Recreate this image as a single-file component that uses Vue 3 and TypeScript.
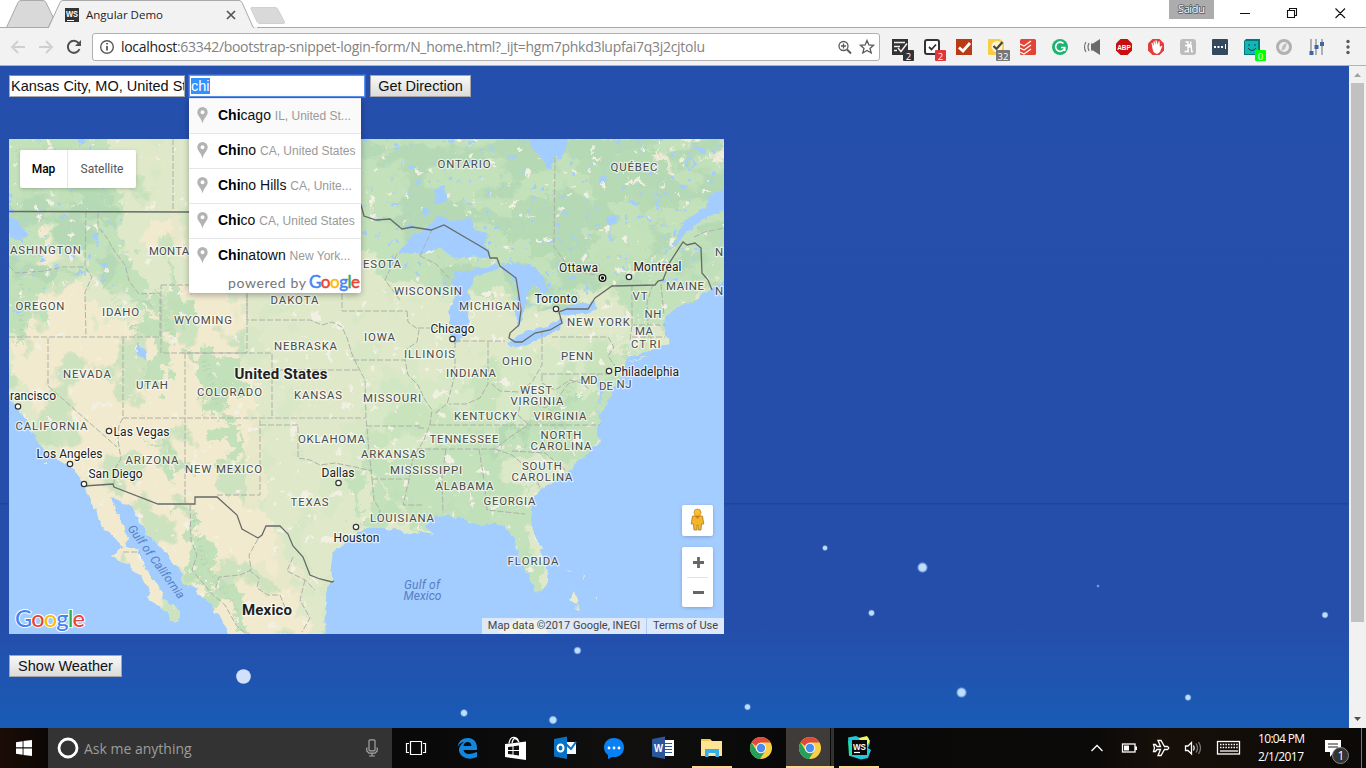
<script setup lang="ts">
interface Label { t: string; x: number; y: number; w?: number; k?: string }

const places: Label[] = [
  { t: 'ASHINGTON', x: 45.5, y: 250, w: 71 }, { t: 'MONTANA', x: 177, y: 251, w: 56 },
  { t: 'OREGON', x: 40, y: 306, w: 49 }, { t: 'IDAHO', x: 120.5, y: 312, w: 37 },
  { t: 'WYOMING', x: 203, y: 320, w: 58 }, { t: 'DAKOTA', x: 294.5, y: 300, w: 48 },
  { t: 'NEBRASKA', x: 305.5, y: 346, w: 63 }, { t: 'NEVADA', x: 87, y: 374, w: 48 },
  { t: 'UTAH', x: 152, y: 385, w: 32 }, { t: 'COLORADO', x: 229.5, y: 392, w: 65 },
  { t: 'KANSAS', x: 318, y: 395, w: 48 }, { t: 'CALIFORNIA', x: 51.5, y: 426, w: 72 },
  { t: 'ARIZONA', x: 152, y: 460, w: 53 }, { t: 'NEW MEXICO', x: 223.5, y: 469, w: 77 },
  { t: 'OKLAHOMA', x: 331.5, y: 439, w: 67 }, { t: 'TEXAS', x: 309.5, y: 502, w: 38 },
  { t: 'ESOTA', x: 382, y: 264, w: 38 }, { t: 'ONTARIO', x: 464, y: 164, w: 53 },
  { t: 'QUÉBEC', x: 634, y: 167, w: 47 }, { t: 'WISCONSIN', x: 428, y: 291, w: 68 },
  { t: 'MICHIGAN', x: 489.5, y: 306, w: 61 }, { t: 'IOWA', x: 379.5, y: 337, w: 31 },
  { t: 'ILLINOIS', x: 429.5, y: 354, w: 51 }, { t: 'INDIANA', x: 471, y: 373, w: 50 },
  { t: 'OHIO', x: 517, y: 361, w: 30 }, { t: 'PENN', x: 577, y: 356, w: 32 },
  { t: 'NEW YORK', x: 598.5, y: 322, w: 63 }, { t: 'VT', x: 640, y: 296, w: 15 },
  { t: 'NH', x: 653, y: 314, w: 17 }, { t: 'MAINE', x: 685, y: 286, w: 38 },
  { t: 'N', x: 719, y: 252 }, { t: 'N', x: 719, y: 291 },
  { t: 'MA', x: 644, y: 331, w: 18 }, { t: 'CT', x: 638.5, y: 344, w: 15 }, { t: 'RI', x: 655, y: 344, w: 11 },
  { t: 'MD', x: 589, y: 380, w: 17 }, { t: 'DE', x: 606, y: 386, w: 14 }, { t: 'NJ', x: 624, y: 384, w: 15 },
  { t: 'MISSOURI', x: 392, y: 398, w: 58 }, { t: 'WEST', x: 536, y: 390, w: 32 },
  { t: 'VIRGINIA', x: 537, y: 401, w: 53 }, { t: 'KENTUCKY', x: 485.5, y: 416, w: 63 },
  { t: 'VIRGINIA', x: 560, y: 416, w: 53 }, { t: 'TENNESSEE', x: 464, y: 439, w: 69 },
  { t: 'NORTH', x: 561, y: 434.5, w: 41 }, { t: 'CAROLINA', x: 561, y: 445.5, w: 61 },
  { t: 'ARKANSAS', x: 393, y: 454, w: 64 }, { t: 'MISSISSIPPI', x: 426, y: 470, w: 72 },
  { t: 'SOUTH', x: 542, y: 465.5, w: 40 }, { t: 'CAROLINA', x: 542, y: 476.5, w: 61 },
  { t: 'ALABAMA', x: 464.5, y: 486, w: 58 }, { t: 'GEORGIA', x: 509.5, y: 501, w: 52 },
  { t: 'LOUISIANA', x: 402, y: 518, w: 64 }, { t: 'FLORIDA', x: 533, y: 561, w: 51 },
  { t: 'rancisco', x: 33, y: 396, w: 46, k: 'city' }, { t: 'Las Vegas', x: 141.5, y: 431.5, w: 56, k: 'city' },
  { t: 'Los Angeles', x: 69.5, y: 454, w: 66, k: 'city' }, { t: 'San Diego', x: 115.5, y: 474, w: 54, k: 'city' },
  { t: 'Dallas', x: 338, y: 473, w: 33, k: 'city' }, { t: 'Houston', x: 356.5, y: 538, w: 46, k: 'city' },
  { t: 'Chicago', x: 452.5, y: 329, w: 44, k: 'city' }, { t: 'Toronto', x: 556, y: 299, w: 43, k: 'city' },
  { t: 'Ottawa', x: 578.5, y: 267.5, w: 39, k: 'city' }, { t: 'Montreal', x: 657.5, y: 267, w: 48, k: 'city' },
  { t: 'Philadelphia', x: 646.5, y: 371.5, w: 65, k: 'city' },
  { t: 'United States', x: 281, y: 373.5, w: 93, k: 'nation' }, { t: 'Mexico', x: 267, y: 609, w: 50, k: 'nation' },
  { t: 'Gulf of', x: 422, y: 584.5, w: 36, k: 'sea' }, { t: 'Mexico', x: 422.5, y: 596, w: 38, k: 'sea' },
]

const dots: number[][] = [[18, 406.5], [109, 431], [70, 464], [84, 484], [338.5, 483], [356, 527], [452.5, 339], [556, 309], [629, 277], [609, 371]]

const states = [
  'M9 266L16 273L45 271L62 267H84', 'M86 212L85 267L92 277L85 292L86 337', 'M9 337H160V293L139 294L129 281L125 265L115 252L107 238L98 227V212',
  'M161 285H247V353H161Z', 'M123 338V418L119 425L118 440L121 459L114 470L114 484', 'M48 338V386L117 447', 'M123 418H365', 'M185 353V504', 'M185 353H272V418',
  'M217 495H260V418', 'M260 425H298V458L310 460L320 465L335 463L355 467L372 471', 'M173 139V211', 'M247 212V320H310L322 325L332 322L342 327L347 338L352 354L358 367L365 380L366 418L369 450L372 479',
  'M272 370H358', 'M342 222V311H407', 'M353 360H405', 'M366 426H420',
  'M372 479H410', 'M372 479L374 500L380 510L378 525',
  'M407 311L408 322L419 330L417 342L407 349L405 360L408 375L418 385L425 400L432 410L430 424L424 440L413 458L409 480L403 505H424', 'M430 425H600', 'M418 428H426', 'M417 449H495L510 437L528 425',
  'M446 449L442 475L443 513', 'M479 449L484 480L487 510L525 514', 'M495 449L512 455L530 470L540 487', 'M512 451L545 453L565 470',
  'M418 328H448', 'M455 342V375L452 386L447 404L434 414', 'M488 342V384L480 398L466 404L449 404', 'M455 341H505', 'M542 330V365L532 382L519 392L500 391L492 384', 'M541 374H610',
  'M552 337H608L614 347L608 356L615 366', 'M542 375V383L555 390L570 380L582 383L590 390', 'M528 401L545 408L558 398L568 384L582 379', 'M528 424L518 415L520 405',
  'M555 157L554 247L565 262L580 272L600 276', 'M632 286V325L630 340', 'M653 284L647 302L648 325', 'M661 284L664 315', 'M631 325H665', 'M632 337H665', 'M651 337V345',
  'M400 300L385 280L398 252', 'M420 256L432 230', 'M420 256L436 264L449 278',
  'M123 552H140', 'M190 505L191 540L197 555L192 570L203 583L212 594L225 605L236 625L246 634',
  'M258 539L249 555L251 570L240 575L219 577L215 590', 'M249 570L259 578L257 588L268 595L280 595L286 610', 'M293 557L287 571L305 580L315 590', 'M305 580L300 600L310 618L302 632', 'M694 237L705 232L724 228',
]

const landMain = 'M0 130H740V272L724 280L718 284L710 290L700 297L685 304L672 310L665 318L663 330L666 335L672 342L667 345L640 353L627 359L624 368L620 380L610 395L605 404L600 413L594 405L597 413L600 422L597 430L601 441L590 451L578 462L564 474L552 483L538 490L532 502L530 515L533 530L541 550L548 568L547 582L543 590L535 592L530 577L520 562L516 548L515 538L508 530L495 522L482 527L473 522L463 518L447 515L433 518L425 526L433 534L423 532L410 535L400 530L384 528L368 528L358 531L351 540L341 546L333 553L331 565L332 578L329 585L326 600L325 640H230L227 630L220 617L212 605L203 597L193 586L182 583L183 574L178 568L170 558L158 545L146 532L137 518L133 507L119 500L111 497L113 505L118 515L125 530L128 545L139 550L143 565L150 575L158 585L163 596L168 606L175 604L180 614L178 622L172 622L168 613L158 605L146 598L150 590L140 575L125 563L111 556L124 547L115 537L103 527L97 513L90 497L84 486L78 475L70 466L62 462L45 452L37 442L28 423L20 411L9 395L0 385Z'

const suggestions = [
  { rest: 'cago', area: 'IL, United St...' }, { rest: 'no', area: 'CA, United States' },
  { rest: 'no Hills', area: 'CA, Unite...' }, { rest: 'co', area: 'CA, United States' }, { rest: 'natown', area: 'New York...' },
]

const stars = [[825, 482, 2.5], [922.5, 501.5, 5], [1098, 520, 1.3], [871.5, 547, 3], [1325, 549, 3], [577.5, 584.5, 3.5], [961.5, 626.5, 5], [1188, 631.5, 3], [464, 647, 3.5], [553, 654, 4], [747.5, 641, 3]]
const logo = [['G', '#4285f4'], ['o', '#ea4335'], ['o', '#fbbc05'], ['g', '#4285f4'], ['l', '#34a853'], ['e', '#ea4335']]
</script>

<template>
  <div class="screen">
    <svg class="tabs" width="1366" height="28" viewBox="0 0 1366 28">
      <path d="M0 28.500H6L18 2.500Q19 .5 21 .5H43Q45 .5 46 2.500L53 17L48 28" fill="#d9d9d9" stroke="#a9a9a9" />
      <path d="M0 28.500H48L60 2.500Q61 .5 63 .5H239Q241 .5 242 2.500L253 27Q254 28.500 257 28.500" fill="#f2f2f2" stroke="#a9a9a9" />
      <path d="M252 7.500H275Q277 7.500 278 9.500L284.500 22Q285 23.500 283 23.500H260Q258 23.500 257 21.500L251 9Q250.500 7.500 252 7.500Z" fill="#d9d9d9" stroke="#d0d0d0" />
      <path d="M257 27.500H1366" stroke="#a9a9a9" />
      <path d="M0 27.500H48" stroke="#a9a9a9" />
      <rect x="65" y="8" width="14" height="14" fill="#343434" />
      <text x="66" y="16.500" class="wsmini" textLength="12" lengthAdjust="spacingAndGlyphs">WS</text><path d="M67 20.500H74" stroke="#fff" />
      <text x="86" y="19" class="title" textLength="77">Angular Demo</text>
      <path d="M227 11L235 19M235 11L227 19" stroke="#555" stroke-width="1.700" />
      <rect x="1169" width="45" height="19" fill="#acacac" />
      <text x="1178" y="13" class="user" textLength="27">Saidu</text>
      <path d="M1240 13.500H1250M1287.500 10.500H1294.500V17.500H1287.500ZM1289.500 10V8.500H1296.500V15.500H1295M1335.500 8.500L1345 18M1345 8.500L1335.500 18" fill="none" stroke="#111" stroke-width="1.100" />
    </svg>

    <div class="toolbar">
      <svg class="nav" width="84" height="37" viewBox="0 28 84 37" fill="none" stroke-width="1.800">
        <path d="M25 47H12M18 41L12 47L18 53" stroke="#cfcfcf" /><path d="M39 47H52M46 41L52 47L46 53" stroke="#cfcfcf" />
        <path d="M78.500 43A6 6 0 1 0 79.500 49" stroke="#505050" stroke-width="2" /><path d="M81 40V46H75Z" fill="#505050" />
      </svg>
      <div class="omnibox">
        <svg width="16" height="16" viewBox="0 0 16 16" fill="none" stroke="#5a5a5a" stroke-width="1.400"><circle cx="8" cy="8" r="6.300" /><path d="M8 7V11.500M8 4V5.500" stroke-width="1.800" /></svg>
        <svg class="url" width="600" height="22" viewBox="0 0 600 22"><text x="0" y="16" textLength="584"><tspan fill="#222">localhost</tspan>:63342/bootstrap-snippet-login-form/N_home.html?_ijt=hgm7phkd3lupfai7q3j2cjtolu</text></svg>
        <svg class="omni-actions" width="40" height="18" viewBox="837 38 40 18" fill="none" stroke="#5a5a5a" stroke-width="1.300">
          <circle cx="843.500" cy="46" r="4.500" /><path d="M847 49.500L851 53.500" stroke-width="2" /><path d="M841 46H846M843.500 43.500V48.500" />
          <path d="M867 40.500L868.900 45L873.500 45.300L870 48.400L871.200 53L867 50.500L862.800 53L864 48.400L860.500 45.300L865.100 45Z" />
        </svg>
      </div>
      <svg class="extensions" width="484" height="37" viewBox="882 28 484 37">
        <rect x="892" y="39" width="16" height="16" fill="#333" /><path d="M894 42.500H905M894 46.500H900M894 50.500H897M898 48L901 51.500L907 43.500" stroke="#eee" stroke-width="1.500" fill="none" />
        <rect x="925" y="40" width="14" height="14" rx="2" fill="#fff" stroke="#333" stroke-width="2" /><path d="M929 47L931.500 49.500L936 44.500" stroke="#333" stroke-width="1.800" fill="none" />
        <rect x="956" y="39" width="16" height="16" fill="#b93a14" /><path d="M959 47.500L963 51L970 43" stroke="#fff" stroke-width="2.800" fill="none" />
        <rect x="988" y="39" width="16" height="16" rx="1" fill="#f9ce45" /><path d="M1000 39H1004V43Z" fill="#fff3bf" /><circle cx="997" cy="46.500" r="5.500" fill="#fdf3cf" /><path d="M993.500 46L996.500 49L1002.500 42" stroke="#444" stroke-width="2.200" fill="none" />
        <rect x="1020" y="39" width="16" height="16" rx="1.500" fill="#e34435" /><path d="M1020 44L1024 46L1031 41M1020 48L1024 50L1031 45M1020 52L1024 54L1031 49" stroke="#fff" stroke-width="1.200" fill="none" />
        <circle cx="1060" cy="47" r="8" fill="#1cb472" /><path d="M1063.500 43.500A4.600 4.600 0 1 0 1064.500 48.500M1061 47.500H1064.800V51" stroke="#fff" stroke-width="1.600" fill="none" />
        <path d="M1091 43.500H1093L1100 39V55L1093 50.500H1091Z" fill="#6b6b6b" /><path d="M1089 43Q1087 47 1089 51M1086 42Q1083 47 1086 52" stroke="#777" stroke-width="1.200" fill="none" />
        <path d="M1120.500 39H1127.500L1132 43.500V50.500L1127.500 55H1120.500L1116 50.500V43.500Z" fill="#c80d0d" /><text x="1117.200" y="50" class="abp" textLength="13.600" lengthAdjust="spacingAndGlyphs">ABP</text>
        <path d="M1152.500 39H1159.500L1164 43.500V50.500L1159.500 55H1152.500L1148 50.500V43.500Z" fill="#e53b3b" /><path d="M1153 49L1152 43L1154 47V41.500L1156 46V40.500L1158 46L1159 41.500L1159.500 47.500L1162 46L1159.500 52Q1157 55 1154 52Z" fill="#fff" stroke="#fff" stroke-width=".8" />
        <rect x="1180" y="39" width="16" height="16" rx="3" fill="#bcbcbc" /><path d="M1185.500 42H1188V51.500M1184.500 51.500H1189M1188 47.500Q1191.500 45.500 1191.500 48.500V51.500H1193M1185 45.500H1192M1188 45.500Q1192 44 1190.500 41.500" stroke="#fff" stroke-width="1.400" fill="none" />
        <rect x="1212" y="39" width="16" height="16" rx="1" fill="#34495e" /><path d="M1214 46h2v2h-2zM1217.500 46h2v2h-2zM1221 46h2v2h-2zM1225 44h1v5h-1z" fill="#fff" />
        <path d="M1246 39H1260V53L1258 55H1244V41Z" fill="#00797c" /><path d="M1245 41H1258V54H1245Z" fill="#12b5b8" /><path d="M1249 44V46M1255 44V46M1248 48Q1252 53 1256 48" stroke="#174448" fill="none" />
        <circle cx="1284" cy="47" r="6.500" fill="#eee" stroke="#b1b1b1" stroke-width="3" /><path d="M1281 51L1283 45L1287 43L1285 49Z" fill="#bdbdbd" />
        <path d="M1311 39V55M1316 39V55M1322 39V55" stroke="#999" stroke-width="1.500" /><path d="M1309.500 51h4v4h-4zM1314.500 45h4v4h-4zM1320 42h4v4h-4z" fill="#3c67a4" />
        <circle cx="1348" cy="41.500" r="1.700" fill="#5a5a5a" /><circle cx="1348" cy="47" r="1.700" fill="#5a5a5a" /><circle cx="1348" cy="52.500" r="1.700" fill="#5a5a5a" />
        <g class="badge"><rect x="903" y="50" width="11" height="11" rx="1" fill="#333" /><text x="908.500" y="59.500">2</text>
          <rect x="935" y="50" width="11" height="11" rx="1" fill="#dd3838" /><text x="940.500" y="59.500">2</text>
          <rect x="996" y="50" width="14" height="11" rx="1" fill="#777" /><text x="1003" y="59.500">32</text>
          <rect x="1255" y="50" width="11" height="11" rx="1" fill="#0f0" /><text x="1260.500" y="59.500">0</text></g>
      </svg>
    </div>

    <div class="viewport">
      <main class="page">
        <svg class="sky" width="1349" height="662" viewBox="0 0 1349 662">
          <defs><radialGradient id="star"><stop offset="0" stop-color="#cfe8ff" /><stop offset=".65" stop-color="#bfe0ff" /><stop offset="1" stop-color="#7fb4ee" stop-opacity=".25" /></radialGradient></defs>
          <rect y="437" width="1349" height="1.500" fill="#1d4699" />
          <circle v-for="(s, i) in stars" :key="i" :cx="s[0]" :cy="s[1]" :r="s[2] + 0.4" fill="url(#star)" :opacity="s[2] > 2 ? 0.95 : 0.5" />
          <circle cx="243.500" cy="610.500" r="7.300" fill="#d2e1fb" />
        </svg>
        <div class="form">
          <div class="field">Kansas City, MO, United States</div>
          <div class="field focus"><span class="picked">chi</span>
            <div class="suggest">
              <div v-for="s in suggestions" :key="s.rest + s.area" class="item">
                <svg width="11" height="17" viewBox="0 0 11 17"><path fill-rule="evenodd" d="M5.500 0A5.200 5.200 0 0 0 .3 5.200C.3 9 4.500 11 5.500 16.500C6.500 11 10.700 9 10.700 5.200A5.200 5.200 0 0 0 5.500 0ZM5.500 3.300A2 2 0 1 1 5.500 7.300A2 2 0 1 1 5.500 3.300Z" fill="#b3b3b3" /></svg>
                <span class="place"><b>Chi</b>{{ s.rest }} <small>{{ s.area }}</small></span>
              </div>
              <svg class="powered" width="172" height="20" viewBox="0 0 172 20">
                <text x="39" y="14.500" textLength="78" class="by">powered by</text>
                <text x="120" y="15" textLength="51" class="glogo"><tspan v-for="(l, i) in logo" :key="i" :fill="l[1]" :stroke="l[1]">{{ l[0] }}</tspan></text>
              </svg>
            </div>
          </div>
          <div class="btn">Get Direction</div>
        </div>

        <div class="map">
          <svg width="715" height="495" viewBox="9 139 715 495">
            <defs>
              <filter id="rough" x="-5%" y="-5%" width="110%" height="110%" color-interpolation-filters="sRGB"><feTurbulence type="fractalNoise" baseFrequency=".12" numOctaves="3" seed="4" /><feDisplacementMap in="SourceGraphic" scale="7" xChannelSelector="R" yChannelSelector="G" /></filter>
              <filter id="edge" x="-5%" y="-5%" width="110%" height="110%" color-interpolation-filters="sRGB"><feTurbulence type="fractalNoise" baseFrequency=".05" numOctaves="4" seed="9" /><feDisplacementMap in="SourceGraphic" scale="45" xChannelSelector="R" yChannelSelector="G" /></filter>
              <filter id="greens" x="0" y="0" width="100%" height="100%" color-interpolation-filters="sRGB"><feTurbulence type="fractalNoise" baseFrequency=".026 .02" numOctaves="5" seed="11" /><feColorMatrix values="0 0 0 0 .75 0 0 0 0 .875 0 0 0 0 .72 14 0 0 0 -7.700" /></filter>
              <filter id="darks" x="0" y="0" width="100%" height="100%" color-interpolation-filters="sRGB"><feTurbulence type="fractalNoise" baseFrequency=".02 .03" numOctaves="5" seed="23" /><feColorMatrix values="0 0 0 0 .71 0 0 0 0 .85 0 0 0 0 .71 14 0 0 0 -7" /></filter>
              <filter id="pales" x="0" y="0" width="100%" height="100%" color-interpolation-filters="sRGB"><feTurbulence type="fractalNoise" baseFrequency=".09" numOctaves="4" seed="5" /><feColorMatrix values="0 0 0 0 .95 0 0 0 0 .94 0 0 0 0 .89 0 18 0 0 -12.600" /></filter>
              <filter id="ponds" x="0" y="0" width="100%" height="100%" color-interpolation-filters="sRGB"><feTurbulence type="fractalNoise" baseFrequency=".13" numOctaves="3" seed="31" /><feColorMatrix values="0 0 0 0 .64 0 0 0 0 .8 0 0 0 0 1 0 0 20 0 -14" /></filter>
              <clipPath id="land"><path :d="landMain" /></clipPath>
              <clipPath id="north"><path d="M340 139H724V285L660 282L612 286L585 310L520 310L500 265L440 290L350 230ZM9 139H115L125 250L155 310L100 285L60 270L9 330Z" /></clipPath>
              <clipPath id="east"><path d="M365 430L500 340L724 200V480L550 640H480V534H370Z" /></clipPath>
              <clipPath id="west"><path d="M0 130H130L180 260L245 330V560L340 640H0Z" /></clipPath>
            </defs>
            <rect x="9" y="139" width="715" height="495" fill="#a3ccff" />
            <g filter="url(#rough)">
              <g clip-path="url(#land)">
                <rect x="0" y="130" width="740" height="510" fill="#dfe9ca" />
                <g filter="url(#edge)">
                  <path d="M20 285H85L95 315L140 325L165 290L220 280L245 305L240 350L250 410L268 425L262 500L280 530L300 580L310 640H80V480L60 450L30 400L10 350Z" fill="#f2eacf" />
                  <path d="M45 240L75 220L80 265L45 262ZM150 222L185 220L190 250L140 250Z" fill="#f2eacf" />
                  <path d="M335 120H760V260L690 300L665 325L640 330L612 290L560 305L530 290L490 295L400 285L345 235ZM-10 120H115L120 190L128 250L155 300L150 315L120 290L90 270L70 210L40 250L38 330L-10 330Z" fill="#c3e1bb" />
                  <path d="M-10 270H30L25 350L10 330ZM170 260L190 320L155 315ZM145 310L172 330L165 400L145 390ZM190 355H240L235 420L205 415ZM218 420L240 430L232 470L220 465ZM140 430L180 460L195 480L170 465ZM185 505L200 520L204 560L245 600L247 640L190 570Z" fill="#c2e0b9" />
                  <path d="M366 380L430 380L500 360L640 320L610 370L580 450L366 450Z" fill="#d6e8c6" />
                  <path d="M440 640L545 600L530 500L600 440L640 340L620 370L580 400L500 430L440 450L370 455L350 530L440 520ZM352 470L372 475V525L350 530Z" fill="#c3e1bb" />
                  <path d="M500 455L545 453L560 475L525 500L505 480ZM375 470L395 500L400 530L390 510Z" fill="#dde8c9" />
                  <path d="M480 220L550 190L600 240L570 280L520 240ZM570 145L660 150L680 210L600 210ZM580 380L560 410L500 435L485 460L530 430L580 410ZM30 145L105 190L120 240L90 200L40 180Z" fill="#b6dab4" />
                  <path d="M682 139L724 139V170L700 150ZM654 156L675 160L670 170Z" fill="#f2ebdb" />
                </g>
                <g clip-path="url(#west)"><rect x="9" y="139" width="715" height="495" filter="url(#greens)" opacity=".65" /></g>
                <rect x="9" y="139" width="715" height="495" filter="url(#greens)" opacity=".22" />
                <g clip-path="url(#north)"><rect x="9" y="139" width="715" height="495" filter="url(#darks)" /><rect x="9" y="139" width="715" height="495" filter="url(#ponds)" /></g>
                <g clip-path="url(#east)"><rect x="9" y="139" width="715" height="495" filter="url(#greens)" opacity=".45" /></g>
                <rect x="9" y="139" width="715" height="495" filter="url(#pales)" />
              </g>
              <g fill="#a3ccff">
                <path d="M663 253L675 242L680 228L690 217L705 208L712 193L740 184V205L705 217L690 228L680 240L665 254ZM397 255L410 237L430 225L437 215L450 220L470 217L474 230L488 233L485 245L490 260L473 255L460 259L440 247L420 256L413 252Z" />
                <path d="M452 282L460 273L477 268L500 265L498 270L488 272L475 277L468 290L470 303L468 330L460 342L453 343L450 327V307L455 290ZM500 263L537 267L545 283L550 292L542 295L533 283L527 297L523 317L518 327L515 312L518 290L513 277L503 270Z" />
                <path d="M508 342L527 331L547 326L562 319L560 328L547 336L530 343L515 348ZM557 313L567 307L580 303L595 301L596 308L588 313L570 315ZM523 130L533 150L542 157L545 167L552 168L553 158L563 158L567 145V130ZM434 190L445 187L448 200L440 204L436 202ZM137 342L147 352L145 361L138 353ZM9 215L20 222L27 235L18 240L9 235Z" />
                <circle cx="690" cy="164" r="5" fill="none" stroke="#a3ccff" stroke-width="2" /><path d="M605 219L616 215L618 223L608 225ZM645 217L653 219L650 223Z" />
                <path d="M599 405L603 390L598 377L594 374L600 392Z" />
              </g>
              <path d="M626 362L650 355L640 359ZM565 571L572 570L570 572ZM582 570L585 575L582 582L584 574ZM569 600L574 591L578 604L573 602ZM574 608L579 607L578 611ZM596 597h2v2h-2zM500 630L520 619L540 621L548 634H500ZM46 463h3v2h-3z" fill="#e7ecd0" />
            </g>
            <path d="M16 150L50 180L80 185M20 280L22 345M103 280L140 340M160 300L175 345M205 360L218 405M193 505L203 560L243 620M501 445L540 420L572 386" fill="none" stroke="#97c4a4" stroke-width="5" stroke-dasharray="1 4" opacity=".35" filter="url(#rough)" />
            <path v-for="(d, i) in states" :key="i" :d="d" fill="none" stroke="#adb2a7" stroke-width="1" stroke-dasharray="6 2" />
            <path d="M9 211.500L189 212H345L361 205L364 216L376 220L390 219L402 229L412 227L431 230L444 225L480 246L488 251L490 258L497 258L500 266L516 278L518 290L521 310L519 325L510 333L509 338L515 342H522L535 333L550 330L562 323L559 312L567 309H588L595 298L612 286L655 285L658 281L663 280L670 262L683 242L687 245L695 243L701 248L702 273L708 280L712 290M84 486L113 484L114 487L158 504H195V497H217L237 515L242 529L258 538L262 535L266 526L280 526L288 534L293 546L303 557L310 575L320 579L332 582L334 581" fill="none" stroke="#666b68" stroke-width="1.300" />
            <g class="labels">
              <text v-for="(p, i) in places" :key="i" :x="p.x" :y="p.y + (p.k === 'nation' ? 5.5 : 4.1)" :textLength="p.w" :class="p.k ?? 'state'">{{ p.t }}</text>
              <text class="sea cal" transform="translate(153 564) rotate(54)" textLength="88">Gulf of California</text>
            </g>
            <circle v-for="(d, i) in dots" :key="'d' + i" :cx="d[0]" :cy="d[1]" r="2.700" fill="#fff" stroke="#333" stroke-width="1.200" />
            <circle cx="602.500" cy="278" r="3.300" fill="#fff" stroke="#111" stroke-width="1.300" /><circle cx="602.500" cy="278" r="1.700" fill="#111" />
            <text x="15" y="626.500" textLength="70" class="mlogo halo" aria-hidden="true"><tspan v-for="(l, i) in logo" :key="i" :fill="l[1]">{{ l[0] }}</tspan></text>
          </svg>
          <div class="types"><span class="on">Map</span><span>Satellite</span></div>
          <div class="controls">
            <svg class="card" width="31" height="31" viewBox="0 0 31 31"><path d="M10.500 11H20.500L21.800 19H19.500L19 25H16.200V20H15V25H12L11.500 19H9.200Z" fill="#f5b52b" stroke="#a77b25" stroke-width=".8" /><circle cx="15.500" cy="7.500" r="3.500" fill="#fcbf2c" stroke="#a77b25" stroke-width=".6" /><path d="M13 11H18L15.500 14Z" fill="#dc7626" /></svg>
            <svg class="card" width="31" height="60" viewBox="0 0 31 60"><path d="M11 15.500H22M16.500 10V21M11 45.500H22" stroke="#666" stroke-width="2.800" /><path d="M5 30.500H26" stroke="#e3e3e3" /></svg>
          </div>
          <div class="credits"><span>Map data ©2017 Google, INEGI</span><span>Terms of Use</span></div>
        </div>
        <div class="btn weather">Show Weather</div>
      </main>
      <svg class="scroll" width="17" height="662" viewBox="0 0 17 662"><rect width="17" height="662" fill="#f1f1f1" /><rect x="2" y="17" width="13" height="539" fill="#c1c1c1" /><path d="M5 11L8.500 7L12 11Z" fill="#a3a3a3" /><path d="M5 651L8.500 655L12 651Z" fill="#505050" /></svg>
    </div>

    <div class="taskbar">
      <svg class="start" width="48" height="40" viewBox="0 728 48 40"><path d="M16 742.200L22.600 741.200V747.300H16ZM23.500 741L32 740V747.300H23.500ZM16 748.500H22.600V754.800L16 753.800ZM23.500 748.500H32V756L23.500 755Z" fill="#fff" /></svg>
      <div class="search">
        <svg width="22" height="22" viewBox="0 0 22 22"><circle cx="11" cy="11" r="9" fill="none" stroke="#fff" stroke-width="2.800" /></svg>
        <span>Ask me anything</span>
        <svg width="12" height="18" viewBox="0 0 12 18" fill="none" stroke="#a5a5a5" stroke-width="1.200"><rect x="3" y=".8" width="6" height="11" rx="1" /><path d="M.8 8.500V12L3 14.200H9L11.200 12V8.500M6 14.500V17M3 17H9" /></svg>
      </div>
      <svg class="apps" width="488" height="40" viewBox="392 728 488 40">
        <rect x="786" y="728" width="44" height="40" fill="#3e3b38" /><rect x="831" y="728" width="3" height="40" fill="#34312e" />
        <path d="M692 766h40v2h-40zM786 766h48v2h-48zM839 766h40v2h-40z" fill="#fbd88b" />
        <path d="M410.500 741.500H421.500V754.500H410.500ZM409 743.500H406.500V752.500H409M423 743.500H425.500V752.500H423" fill="none" stroke="#fff" stroke-width="1.200" />
        <path d="M457.500 747Q459 738 468 738Q477.500 738.500 477 750H463.500Q465 757 477 752V757Q468 761 462 756Q455 749 464 742Q460 742.500 457.500 747ZM463.500 746H471.500Q471 742 467.500 742Q464 742.300 463.500 746Z" fill="#1287e0" fill-rule="evenodd" />
        <path d="M505 744L526 741.500V760L505 757Z" fill="#fff" /><path d="M509 743.500Q510 737 514 737.500Q518 738 518.500 742M512 743Q514 734.500 519 742" stroke="#fff" fill="none" stroke-width="1.300" /><path d="M508 747L512.500 746.500V750H508ZM513.500 746.300L519 745.500V750H513.500ZM508 751H512.500V754.500L508 754ZM513.500 751H519V755.500L513.500 754.800Z" fill="#111" />
        <path d="M565 742H576V754H565Z" fill="#f4f9ff" /><path d="M566 744L571 749L576 742" stroke="#0871c5" stroke-width="2" fill="none" /><path d="M554 739L567 736.500V759L554 756.500Z" fill="#0871c5" /><ellipse cx="560.500" cy="748" rx="3" ry="3.500" fill="none" stroke="#fff" stroke-width="2" />
        <path d="M614 738C607.500 738 604 742.500 604 747.500Q604 752 608 755V759L612 757C620 758 624 753 624 747.500C624 742 620 738 614 738Z" fill="#0a80f5" /><circle cx="609" cy="748" r="1.400" fill="#fff" /><circle cx="614" cy="748" r="1.400" fill="#fff" /><circle cx="619" cy="748" r="1.400" fill="#fff" />
        <path d="M664 740H674V756H664Z" fill="#fff" /><path d="M665 743.500H672M665 746.500H672M665 749.500H672M665 752.500H672" stroke="#2b579a" stroke-width="1.200" /><path d="M652 739L665 736.500V759L652 756.500Z" fill="#2b579a" /><text x="654" y="752" class="word" textLength="9" lengthAdjust="spacingAndGlyphs">W</text>
        <path d="M701 739H710L712 741H722V756H701Z" fill="#fee594" /><path d="M701 739H710V741H701Z" fill="#f5c741" /><path d="M705 749H719V757H715.500V753H708.500V757H705Z" fill="#38aee8" />
        <g v-for="cx in [761, 810]" :key="cx" :transform="`translate(${cx} 748)`"><circle r="11" fill="#f9cf45" /><path d="M-9.500-5.500A11 11 0 0 1 9.500-5.500H0Q-4-5-4.800-2Z" fill="#df4a3e" /><path d="M-9.500-5.500A11 11 0 0 0-1 11L4.500 2.500L-4.500 2.500Z" fill="#24a05b" /><circle r="5.200" fill="#f5f6f2" /><circle r="4.200" fill="#4a8bf4" /></g>
        <path d="M848 737.500L856 736L860 738L868 737L870 743L868 748L871 750L868 758L861 759.500L850 756Z" fill="#20c7dd" /><path d="M859 738L867 736L870 741L864 750Z" fill="#eef85d" /><path d="M848 740L852 745V755L849 756Z" fill="#22dfae" /><rect x="852" y="740" width="15" height="15" fill="#080808" /><text x="853" y="749.500" class="ws" textLength="13" lengthAdjust="spacingAndGlyphs">WS</text><path d="M854 752.500H860" stroke="#fff" stroke-width="1.200" />
      </svg>
      <svg class="tray" width="286" height="40" viewBox="1080 728 286 40">
        <g fill="none" stroke="#fff" stroke-width="1.300">
          <path d="M1091.500 751L1097 745.500L1102.500 751" /><rect x="1122.500" y="744" width="12.500" height="8" /><path d="M1136 746.500V750" stroke-width="2" />
          <path d="M1153.500 744.500H1155.500L1157 746.500H1160.500L1158 740.500H1161L1164.500 746.500H1167.500Q1170 748 1167.500 749.500H1164.500L1161 755.500H1158L1160.500 749.500H1157L1155.500 751.500H1153.500L1154.500 748Z" />
          <path d="M1185.500 746H1188L1191.500 742.500V754L1188 750.500H1185.500Z" /><path d="M1193.500 745.500Q1195 748 1193.500 750.500" /><path d="M1196 743.500Q1199 748 1196 752.500M1198.500 742Q1202.500 748 1198.500 754" stroke="#777" />
          <rect x="1217.500" y="741.500" width="22" height="12.500" /><path d="M1220 744.500H1238M1220 747.500H1238" stroke-dasharray="1.500 1.200" /><path d="M1220 751H1238" />
        </g>
        <path d="M1124 745.500h5v5h-5z" fill="#fff" />
        <text x="1258" y="743" class="clock" textLength="47">10:04 PM</text><text x="1258" y="761" class="clock" textLength="46">2/1/2017</text>
        <path d="M1325 740H1341V752H1334L1330 757V752H1325Z" fill="#fff" /><path d="M1328 744H1338M1328 747H1338" stroke="#222" /><circle cx="1340.500" cy="755.500" r="8" fill="#333" stroke="#888" /><text x="1337.500" y="760" class="clock">1</text><path d="M1361.500 728V768" stroke="#777" />
      </svg>
    </div>
  </div>
</template>

<style>
body { margin: 0; overflow: hidden; }
</style>

<style scoped>
.screen { width: 1366px; height: 768px; display: flex; flex-direction: column; overflow: hidden; background: #fff; font-family: "Liberation Sans", Arial, sans-serif; }
svg { display: block; flex: none; }
.title { font: 11.5px "Open Sans", sans-serif; fill: #222; }
.user { font: 11.5px "Open Sans", sans-serif; fill: #fff; stroke: #555; stroke-width: 1.5px; paint-order: stroke; }
.wsmini { font: bold 8.5px "Liberation Sans", sans-serif; fill: #fff; }
.toolbar { height: 37px; background: #f2f2f2; border-bottom: 1px solid #b3b3b3; display: flex; }
.omnibox { box-sizing: border-box; flex: none; width: 788px; height: 28px; margin: 5px 2px 0 8px; border: 1px solid #b0b0b0; border-radius: 3px; background: #fff; display: flex; align-items: center; padding: 0 2px 0 6px; }
.url { margin-left: 6px; }
.url text { font: 14px "Open Sans", sans-serif; fill: #828282; }
.omni-actions { margin-left: auto; }
.badge text { font: 9.5px "Open Sans", sans-serif; fill: #fff; text-anchor: middle; }
.abp { font: bold 7.5px "Liberation Sans", sans-serif; fill: #fff; }
.viewport { height: 662px; display: flex; }
.page { position: relative; box-sizing: border-box; width: 1349px; padding: 9px 9px 0; background: linear-gradient(#254fac 0, #254eab 560px, #2252ae 590px, #195bb5 662px); }
.sky { position: absolute; left: 0; top: 0; }
.form { position: relative; z-index: 3; display: flex; }
.field { position: relative; box-sizing: border-box; width: 176px; height: 22px; border: 1px solid #aaa; border-top-color: #8a8a8a; background: #fff; margin-right: 4px; padding: 0 1px; font-size: 14.5px; line-height: 20px; white-space: nowrap; overflow: hidden; color: #111; }
.field.focus { border: 1px solid #5a95f5; box-shadow: 0 0 0 1px #3468cf; overflow: visible; margin-right: 5px; }
.picked { background: #3390ff; color: #fff; display: inline-block; height: 16px; line-height: 17px; margin-top: 2px; vertical-align: top; }
.btn { position: relative; box-sizing: border-box; height: 22px; width: 101px; border: 1px solid #a6a6a6; background: linear-gradient(#f8f8f8, #dcdcdc); text-align: center; font-size: 14.5px; line-height: 20px; color: #111; }
.suggest { position: absolute; left: -1px; top: 22px; width: 172px; height: 195px; background: #fff; border-radius: 0 0 2px 2px; box-shadow: 0 2px 6px rgba(0, 0, 0, .3); z-index: 4; }
.item { box-sizing: border-box; height: 35px; border-top: 1px solid #e6e6e6; display: flex; align-items: center; padding-left: 8px; }
.item:first-child { background: #fafafa; }
.item svg { margin-top: -2px; }
.place { margin-left: 10px; font-size: 14px; line-height: 33px; color: #111; }
.place b { color: #000; }
.place small { font-size: 12px; color: #999; }
.by { font: 14px Lato, sans-serif; fill: #757575; }
.glogo { font: 17px Lato, sans-serif; stroke-width: .5px; }
.mlogo { font: 500 23.5px Lato, sans-serif; stroke: #fff; stroke-width: 2px; paint-order: stroke; }
.map { position: relative; width: 715px; height: 495px; margin-top: 42px; overflow: hidden; }
.labels text { text-anchor: middle; font-family: Roboto, sans-serif; font-size: 11.4px; fill: #4a4d4b; stroke: rgba(255, 255, 255, .65); stroke-width: 2.5px; paint-order: stroke; stroke-linejoin: round; }
.labels .city { font-size: 12px; fill: #222; }
.labels .nation { font-size: 15px; font-weight: bold; fill: #222; }
.labels .sea { font-style: italic; font-size: 12px; fill: #5580c5; stroke: none; }
.types { position: absolute; left: 11px; top: 11px; display: flex; background: #fff; border-radius: 2px; box-shadow: 0 1px 4px -1px rgba(0, 0, 0, .3); font: 12px/38px Roboto, sans-serif; color: #565656; }
.types span { width: 68px; text-align: center; }
.types .on { width: 47px; border-right: 1px solid #e6e6e6; color: #000; font-weight: 500; }
.controls { position: absolute; right: 11px; top: 366px; display: flex; flex-direction: column; gap: 11px; }
.card { background: #fff; border-radius: 2px; box-shadow: 0 1px 4px -1px rgba(0, 0, 0, .3); }
.credits { position: absolute; right: 0; bottom: 0; display: flex; gap: 1px; font: 11px/16px Roboto, sans-serif; color: #444; white-space: nowrap; }
.credits span { background: rgba(245, 245, 245, .7); width: 77px; text-align: center; }
.credits span:first-child { width: 164px; }
.weather { width: 113px; margin-top: 21px; }
.taskbar { height: 40px; display: flex; background: linear-gradient(90deg, #1b0d06 0, #0b0705 48px, #090909 440px, #11100f 640px, #080808 780px, #0c0a09 1100px, #171009 1160px, #0b0907 1366px); }
.search { box-sizing: border-box; width: 344px; height: 40px; background: #333; display: flex; align-items: center; padding: 0 14px 0 9px; font: 14px "Open Sans", sans-serif; color: #9c9c9c; }
.search span { margin-left: 5px; flex: 1; }
.tray { margin-left: auto; }
.clock { font: 12px "Open Sans", sans-serif; fill: #fff; }
.word { font: bold 11px "Liberation Sans", sans-serif; fill: #fff; }
.ws { font: bold 9.5px "Liberation Sans", sans-serif; fill: #fff; }
</style>
